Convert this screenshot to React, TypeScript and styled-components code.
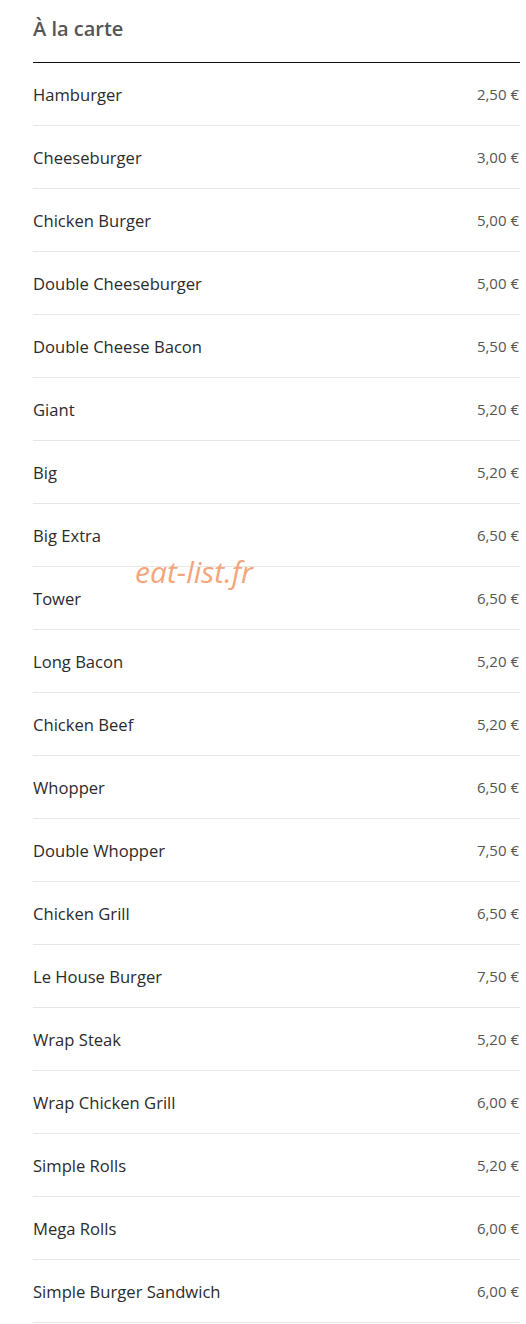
import styled, { createGlobalStyle } from "styled-components";

const GlobalStyle = createGlobalStyle`
    html, body {
        margin: 0;
        padding: 0;
        background: #ffffff;
    }
    body {
        font-family: "Open Sans", "Noto Sans", sans-serif;
    }
`;

const Page = styled.div`
    position: relative;
    width: 526px;
    box-sizing: border-box;
    padding: 0 6px 0 33px;
`;

const Title = styled.h2`
    margin: 0;
    height: 63px;
    box-sizing: border-box;
    padding-top: 15px;
    font-size: 20px;
    font-weight: 600;
    line-height: 28px;
    color: #555555;
    border-bottom: 1px solid #111111;
`;

const List = styled.ul`
    list-style: none;
    margin: 0;
    padding: 0;
`;

const Row = styled.li`
    display: flex;
    align-items: center;
    justify-content: space-between;
    height: 62px;
    border-bottom: 1px solid #e6e6e6;
`;

const Name = styled.span`
    font-size: 16.6px;
    color: #2b2b2b;
`;

const Price = styled.span`
    font-size: 15px;
    color: #555555;
    padding-right: 1px;
`;

const Watermark = styled.div`
    position: absolute;
    left: 135px;
    top: 551px;
    font-size: 30px;
    font-style: italic;
    color: #f3a67c;
    pointer-events: none;
`;

const items: [string, string][] = [
    ["Hamburger", "2,50 €"],
    ["Cheeseburger", "3,00 €"],
    ["Chicken Burger", "5,00 €"],
    ["Double Cheeseburger", "5,00 €"],
    ["Double Cheese Bacon", "5,50 €"],
    ["Giant", "5,20 €"],
    ["Big", "5,20 €"],
    ["Big Extra", "6,50 €"],
    ["Tower", "6,50 €"],
    ["Long Bacon", "5,20 €"],
    ["Chicken Beef", "5,20 €"],
    ["Whopper", "6,50 €"],
    ["Double Whopper", "7,50 €"],
    ["Chicken Grill", "6,50 €"],
    ["Le House Burger", "7,50 €"],
    ["Wrap Steak", "5,20 €"],
    ["Wrap Chicken Grill", "6,00 €"],
    ["Simple Rolls", "5,20 €"],
    ["Mega Rolls", "6,00 €"],
    ["Simple Burger Sandwich", "6,00 €"],
];

export default function App() {
    return (
        <>
            <GlobalStyle />
            <Page>
                <Title>À la carte</Title>
                <List>
                    {items.map(([name, price]) => (
                        <Row key={name}>
                            <Name>{name}</Name>
                            <Price>{price}</Price>
                        </Row>
                    ))}
                </List>
                <Watermark>eat-list.fr</Watermark>
            </Page>
        </>
    );
}
